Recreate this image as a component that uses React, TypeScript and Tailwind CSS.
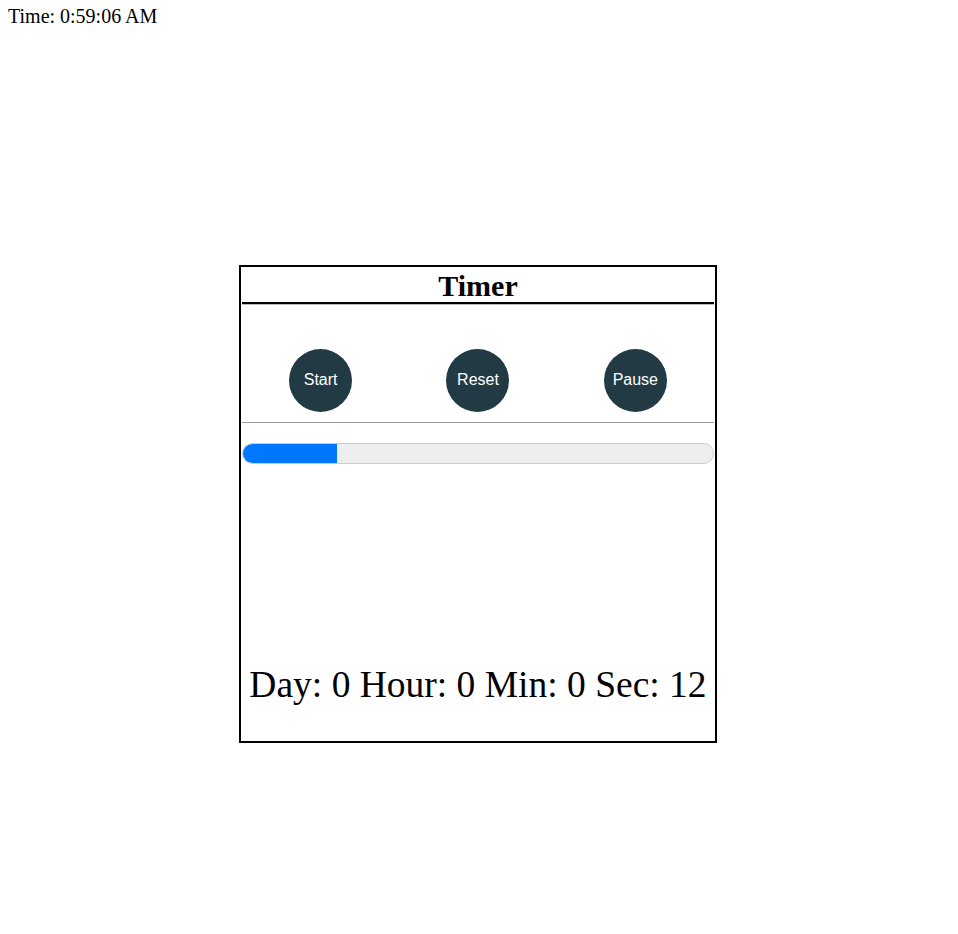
import React from "react";

export default function App() {
  const serif = { fontFamily: '"Liberation Serif", "Times New Roman", serif' };
  return (
    <div className="min-h-[934px] bg-white px-2 pt-[6px] text-black" style={serif}>
      <div className="text-[20px] leading-[20px]">Time: 0:59:06 AM</div>
      <div className="ml-[231px] mt-[239px] flex h-[478px] w-[478px] flex-col border-2 border-black px-px">
        <div className="h-[37px] border-b-2 border-black pt-px text-center text-[30px] font-bold leading-[35px] shadow-[0_1px_0_#bbb]">
          Timer
        </div>
        <div className="mt-[45px] grid grid-cols-3">
          {["Start", "Reset", "Pause"].map((t) => (
            <div key={t} className="flex justify-center">
              <button
                className="flex h-[63px] w-[63px] items-center justify-center rounded-full bg-[#223a44] pb-[2px] text-[16px] text-white"
                style={{ fontFamily: '"Liberation Sans", Arial, sans-serif' }}
              >
                {t}
              </button>
            </div>
          ))}
        </div>
        <div className="mt-[10px] h-px bg-[#999]" />
        <div className="mt-[20px] h-[21px] overflow-hidden rounded-full border border-[#ccc] bg-[#eee]">
          <div className="h-full w-[20%] bg-[#0077ff]" />
        </div>
        <div className="mt-auto pb-[35px] text-center text-[37.5px] leading-[43px]">
          Day: 0 Hour: 0 Min: 0 Sec: 12
        </div>
      </div>
    </div>
  );
}
